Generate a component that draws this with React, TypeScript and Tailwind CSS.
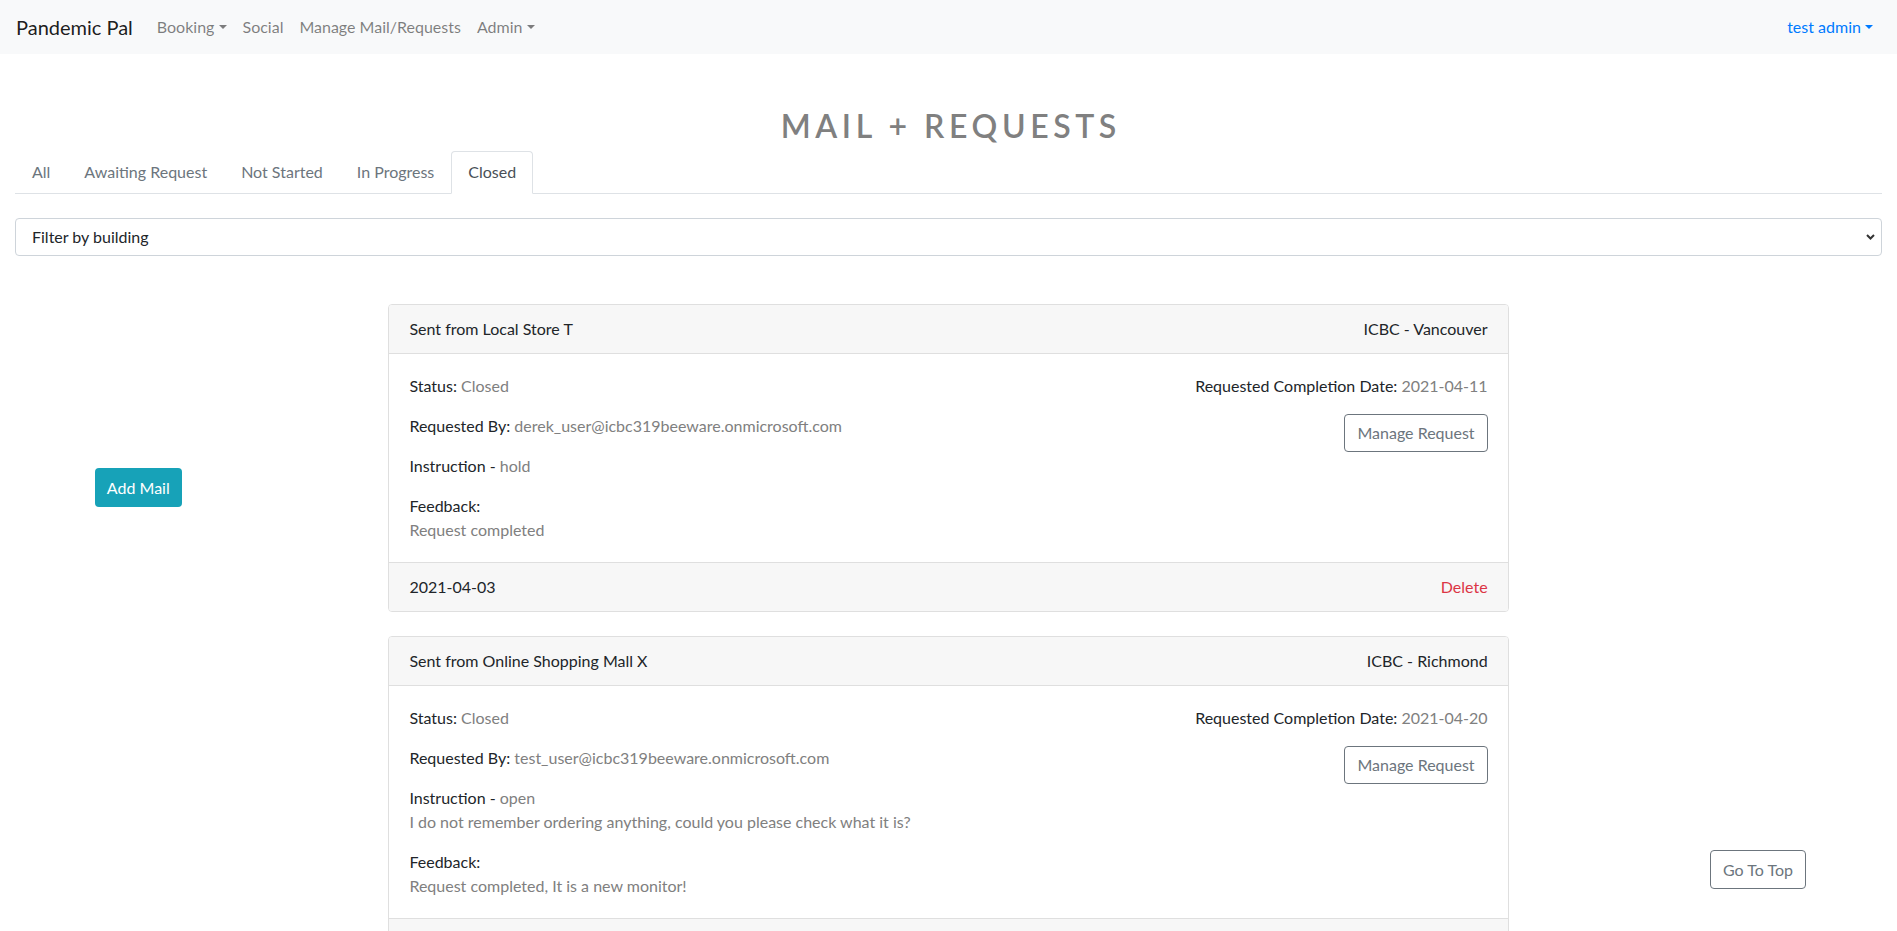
import React from "react";

const Caret = () => (
  <span className="inline-block ml-[0.255em] align-[0.255em] w-0 h-0 border-t-[0.3em] border-t-current border-x-[0.3em] border-x-transparent border-b-0" />
);

type Card = {
  from: string;
  building: string;
  status: string;
  by: string;
  instruction: string;
  detail?: string;
  feedback: string;
  due: string;
  date: string;
};

const cards: Card[] = [
  {
    from: "Sent from Local Store T",
    building: "ICBC - Vancouver",
    status: "Closed",
    by: "derek_user@icbc319beeware.onmicrosoft.com",
    instruction: "hold",
    feedback: "Request completed",
    due: "2021-04-11",
    date: "2021-04-03",
  },
  {
    from: "Sent from Online Shopping Mall X",
    building: "ICBC - Richmond",
    status: "Closed",
    by: "test_user@icbc319beeware.onmicrosoft.com",
    instruction: "open",
    detail: "I do not remember ordering anything, could you please check what it is?",
    feedback: "Request completed, It is a new monitor!",
    due: "2021-04-20",
    date: "2021-04-05",
  },
];

export default function App() {
  return (
    <div className="min-h-screen bg-white font-['Lato','Open_Sans',sans-serif] text-[16px] leading-6 text-[#212529]">
      <nav className="h-[54px] bg-[#f8f9fa] flex items-center px-4">
        <span className="text-[20px] leading-[30px] text-black/90 mr-4">Pandemic Pal</span>
        <ul className="flex items-center text-black/50">
          <li className="px-2">
            Booking
            <Caret />
          </li>
          <li className="px-2">Social</li>
          <li className="px-2">Manage Mail/Requests</li>
          <li className="px-2">
            Admin
            <Caret />
          </li>
        </ul>
        <div className="ml-auto px-2 text-[#007bff]">
          test admin
          <Caret />
        </div>
      </nav>

      <div className="px-[15px]">
        <h1 className="pt-[53px] pb-[6px] pl-[4.6px] text-center text-[32px] leading-[38px] font-semibold tracking-[4.6px] text-[#808080]">
          MAIL + REQUESTS
        </h1>

        <div className="flex border-b border-[#dee2e6]">
          {["All", "Awaiting Request", "Not Started", "In Progress"].map((t) => (
            <div key={t} className="px-4 py-2 text-[#6c757d] border border-transparent">
              {t}
            </div>
          ))}
          <div className="px-4 py-2 text-[#495057] bg-white border border-[#dee2e6] border-b-white rounded-t-[4px] -mb-px">
            Closed
          </div>
        </div>

        <div className="mt-[24px] h-[38px] border border-[#ced4da] rounded-[4px] flex items-center justify-between pl-4 pr-[6px] text-[#212529]">
          <span>Filter by building</span>
          <svg width="9" height="6" viewBox="0 0 9 6" className="text-[#333]">
            <path d="M1 1 L4.5 4.5 L8 1" fill="none" stroke="currentColor" strokeWidth="2" />
          </svg>
        </div>

        <div className="w-[60%] mx-auto mt-[48px]">
          {cards.map((c) => (
            <div key={c.from} className="mb-6 border border-[#dfdfdf] rounded-[4px] overflow-hidden">
              <div className="flex justify-between px-5 py-3 bg-[#f7f7f7] border-b border-[#dfdfdf]">
                <span>{c.from}</span>
                <span>{c.building}</span>
              </div>
              <div className="flex justify-between p-5">
                <div>
                  <p className="mb-4">
                    Status: <span className="text-[#808080]">{c.status}</span>
                  </p>
                  <p className="mb-4">
                    Requested By: <span className="text-[#808080]">{c.by}</span>
                  </p>
                  <p className="mb-4">
                    Instruction - <span className="text-[#808080]">{c.instruction}</span>
                    {c.detail && (
                      <>
                        <br />
                        <span className="text-[#808080]">{c.detail}</span>
                      </>
                    )}
                  </p>
                  <p>
                    Feedback:
                    <br />
                    <span className="text-[#808080]">{c.feedback}</span>
                  </p>
                </div>
                <div className="flex flex-col items-end">
                  <p className="mb-4">
                    Requested Completion Date: <span className="text-[#808080]">{c.due}</span>
                  </p>
                  <button className="h-[38px] px-3 border border-[#6c757d] rounded-[4px] text-[#6c757d] bg-white">
                    Manage Request
                  </button>
                </div>
              </div>
              <div className="flex justify-between px-5 py-3 bg-[#f7f7f7] border-t border-[#dfdfdf]">
                <span>{c.date}</span>
                <span className="text-[#dc3545]">Delete</span>
              </div>
            </div>
          ))}
        </div>
      </div>

      <button className="fixed left-[5%] top-[468px] h-[39px] px-3 rounded-[4px] bg-[#17a2b8] text-white">
        Add Mail
      </button>
      <button className="fixed right-[91px] bottom-[42px] h-[39px] px-3 rounded-[4px] border border-[#6c757d] text-[#6c757d] bg-white">
        Go To Top
      </button>
    </div>
  );
}
